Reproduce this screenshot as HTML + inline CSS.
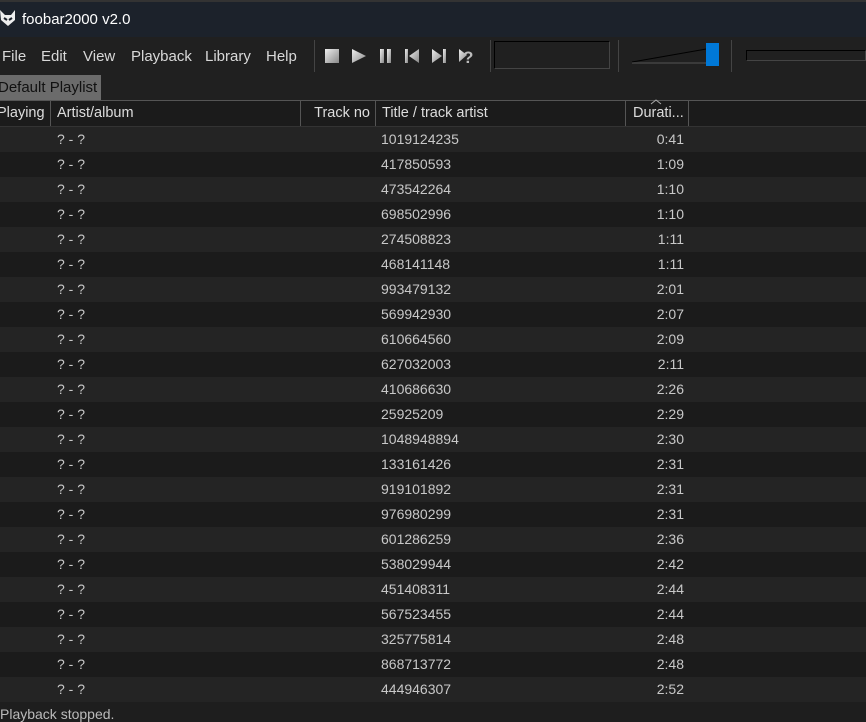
<!DOCTYPE html><html><head><style>
*{margin:0;padding:0;box-sizing:border-box}
body{width:866px;height:714px;background:#1e1e1e;font-family:"Liberation Sans",sans-serif;overflow:hidden;position:relative;color:#ddd}
.a{position:absolute}
#title{left:0;top:0;width:866px;height:37px;background:#1c222b}
#menu{top:37px;left:0;width:866px;height:63px;background:#202020}
.m{top:48px;font-size:15px;color:#d8d8d8}
.hd{top:100px;height:27px;left:0;width:866px;background:#1b1b1b;border-top:1px solid #555;border-bottom:1px solid #333}
.hc{top:101px;height:25px;font-size:14.5px;color:#ddd;line-height:25px;border-right:1px solid #555}
.row{left:0;width:866px;height:25px;font-size:14px;color:#c8c8c8;line-height:25px}
.row span{position:absolute}
</style></head><body>
<div id="title" class="a"></div>
<div class="a" style="left:0;top:0;width:866px;height:2px;background:#333"></div>
<svg class="a" style="left:0;top:8px" width="16" height="20" viewBox="0 0 16 20"><path d="M0 2 L5 7 L11 7 L15 2 L15 12 L8 18 L1 12 Z" fill="#eee"/><path d="M4 10 L7 12 M12 10 L9 12" stroke="#1c222b" stroke-width="2"/></svg>
<div class="a" style="left:22px;top:11px;font-size:15px;color:#fff">foobar2000 v2.0</div>
<div id="menu" class="a"></div>
<div class="a m" style="left:2px">File</div>
<div class="a m" style="left:41px">Edit</div>
<div class="a m" style="left:83px">View</div>
<div class="a m" style="left:131px">Playback</div>
<div class="a m" style="left:205px">Library</div>
<div class="a m" style="left:266px">Help</div>
<div class="a" style="left:314px;top:40px;width:1px;height:32px;background:#444"></div>
<svg class="a" style="left:322px;top:46px" width="160" height="20"><defs><linearGradient id="g" x1="0" y1="0" x2="1" y2="1"><stop offset="0" stop-color="#eee"/><stop offset="1" stop-color="#888"/></linearGradient></defs>
<rect x="3" y="3" width="14" height="14" fill="url(#g)"/>
<path d="M30 3 L44 10 L30 17Z" fill="url(#g)"/>
<rect x="58" y="3" width="4" height="14" fill="url(#g)"/><rect x="65" y="3" width="4" height="14" fill="url(#g)"/>
<rect x="83" y="3" width="3" height="14" fill="url(#g)"/><path d="M97 3 L87 10 L97 17Z" fill="url(#g)"/>
<path d="M110 3 L120 10 L110 17Z" fill="url(#g)"/><rect x="121" y="3" width="3" height="14" fill="url(#g)"/>
<path d="M137 3 L145 9 L137 16Z" fill="url(#g)"/><text x="141" y="17" font-size="17" font-weight="bold" fill="#bbb" font-family="Liberation Sans">?</text></svg>
<div class="a" style="left:490px;top:40px;width:1px;height:32px;background:#444"></div>
<div class="a" style="left:494px;top:41px;width:116px;height:28px;border:1px solid #444;border-top-color:#000;border-left-color:#000"></div>
<div class="a" style="left:618px;top:40px;width:1px;height:32px;background:#444"></div>
<svg class="a" style="left:632px;top:42px" width="90" height="26"><path d="M0 20 L80 6" stroke="#000"/><path d="M0 21 L80 21" stroke="#555"/><rect x="74" y="1" width="13" height="23" fill="#0078d7"/></svg>
<div class="a" style="left:731px;top:40px;width:1px;height:32px;background:#444"></div>
<div class="a" style="left:746px;top:50px;width:120px;height:11px;border:1px solid #444;border-top-color:#000;border-left-color:#000"></div>
<div class="a" style="left:0;top:75px;width:101px;height:25px;background:#6b6b6b;color:#111;font-size:15px;line-height:25px;text-indent:-2px">Default Playlist</div>
<div class="a hd"></div>
<div class="a hc" style="left:0;width:51px;text-indent:-3px">Playing</div>
<div class="a hc" style="left:51px;width:250px;padding-left:6px">Artist/album</div>
<div class="a hc" style="left:301px;width:75px;text-align:right;padding-right:5px">Track no</div>
<div class="a hc" style="left:376px;width:250px;padding-left:6px">Title / track artist</div>
<div class="a hc" style="left:626px;width:63px;padding-left:7px">Durati...</div>
<svg class="a" style="left:650px;top:99px" width="12" height="6"><path d="M1 5 L6 1 L11 5" stroke="#aaa" fill="none"/></svg>
<div id="rows"></div>
<div class="a" style="left:0;top:706px;font-size:14px;color:#bbb">Playback stopped.</div>
<script>
var d=["1019124235 0:41","417850593 1:09","473542264 1:10","698502996 1:10","274508823 1:11","468141148 1:11","993479132 2:01","569942930 2:07","610664560 2:09","627032003 2:11","410686630 2:26","25925209 2:29","1048948894 2:30","133161426 2:31","919101892 2:31","976980299 2:31","601286259 2:36","538029944 2:42","451408311 2:44","567523455 2:44","325775814 2:48","868713772 2:48","444946307 2:52"];
var h="";d.forEach(function(s,i){var p=s.split(" ");h+='<div class="a row" style="top:'+(127+i*25)+'px;background:'+(i%2?'#1b1b1b':'#242424')+'"><span style="left:57px">? - ?</span><span style="left:381px">'+p[0]+'</span><span style="right:182px">'+p[1]+'</span></div>';});
document.getElementById("rows").innerHTML=h;
</script>
</body></html>
